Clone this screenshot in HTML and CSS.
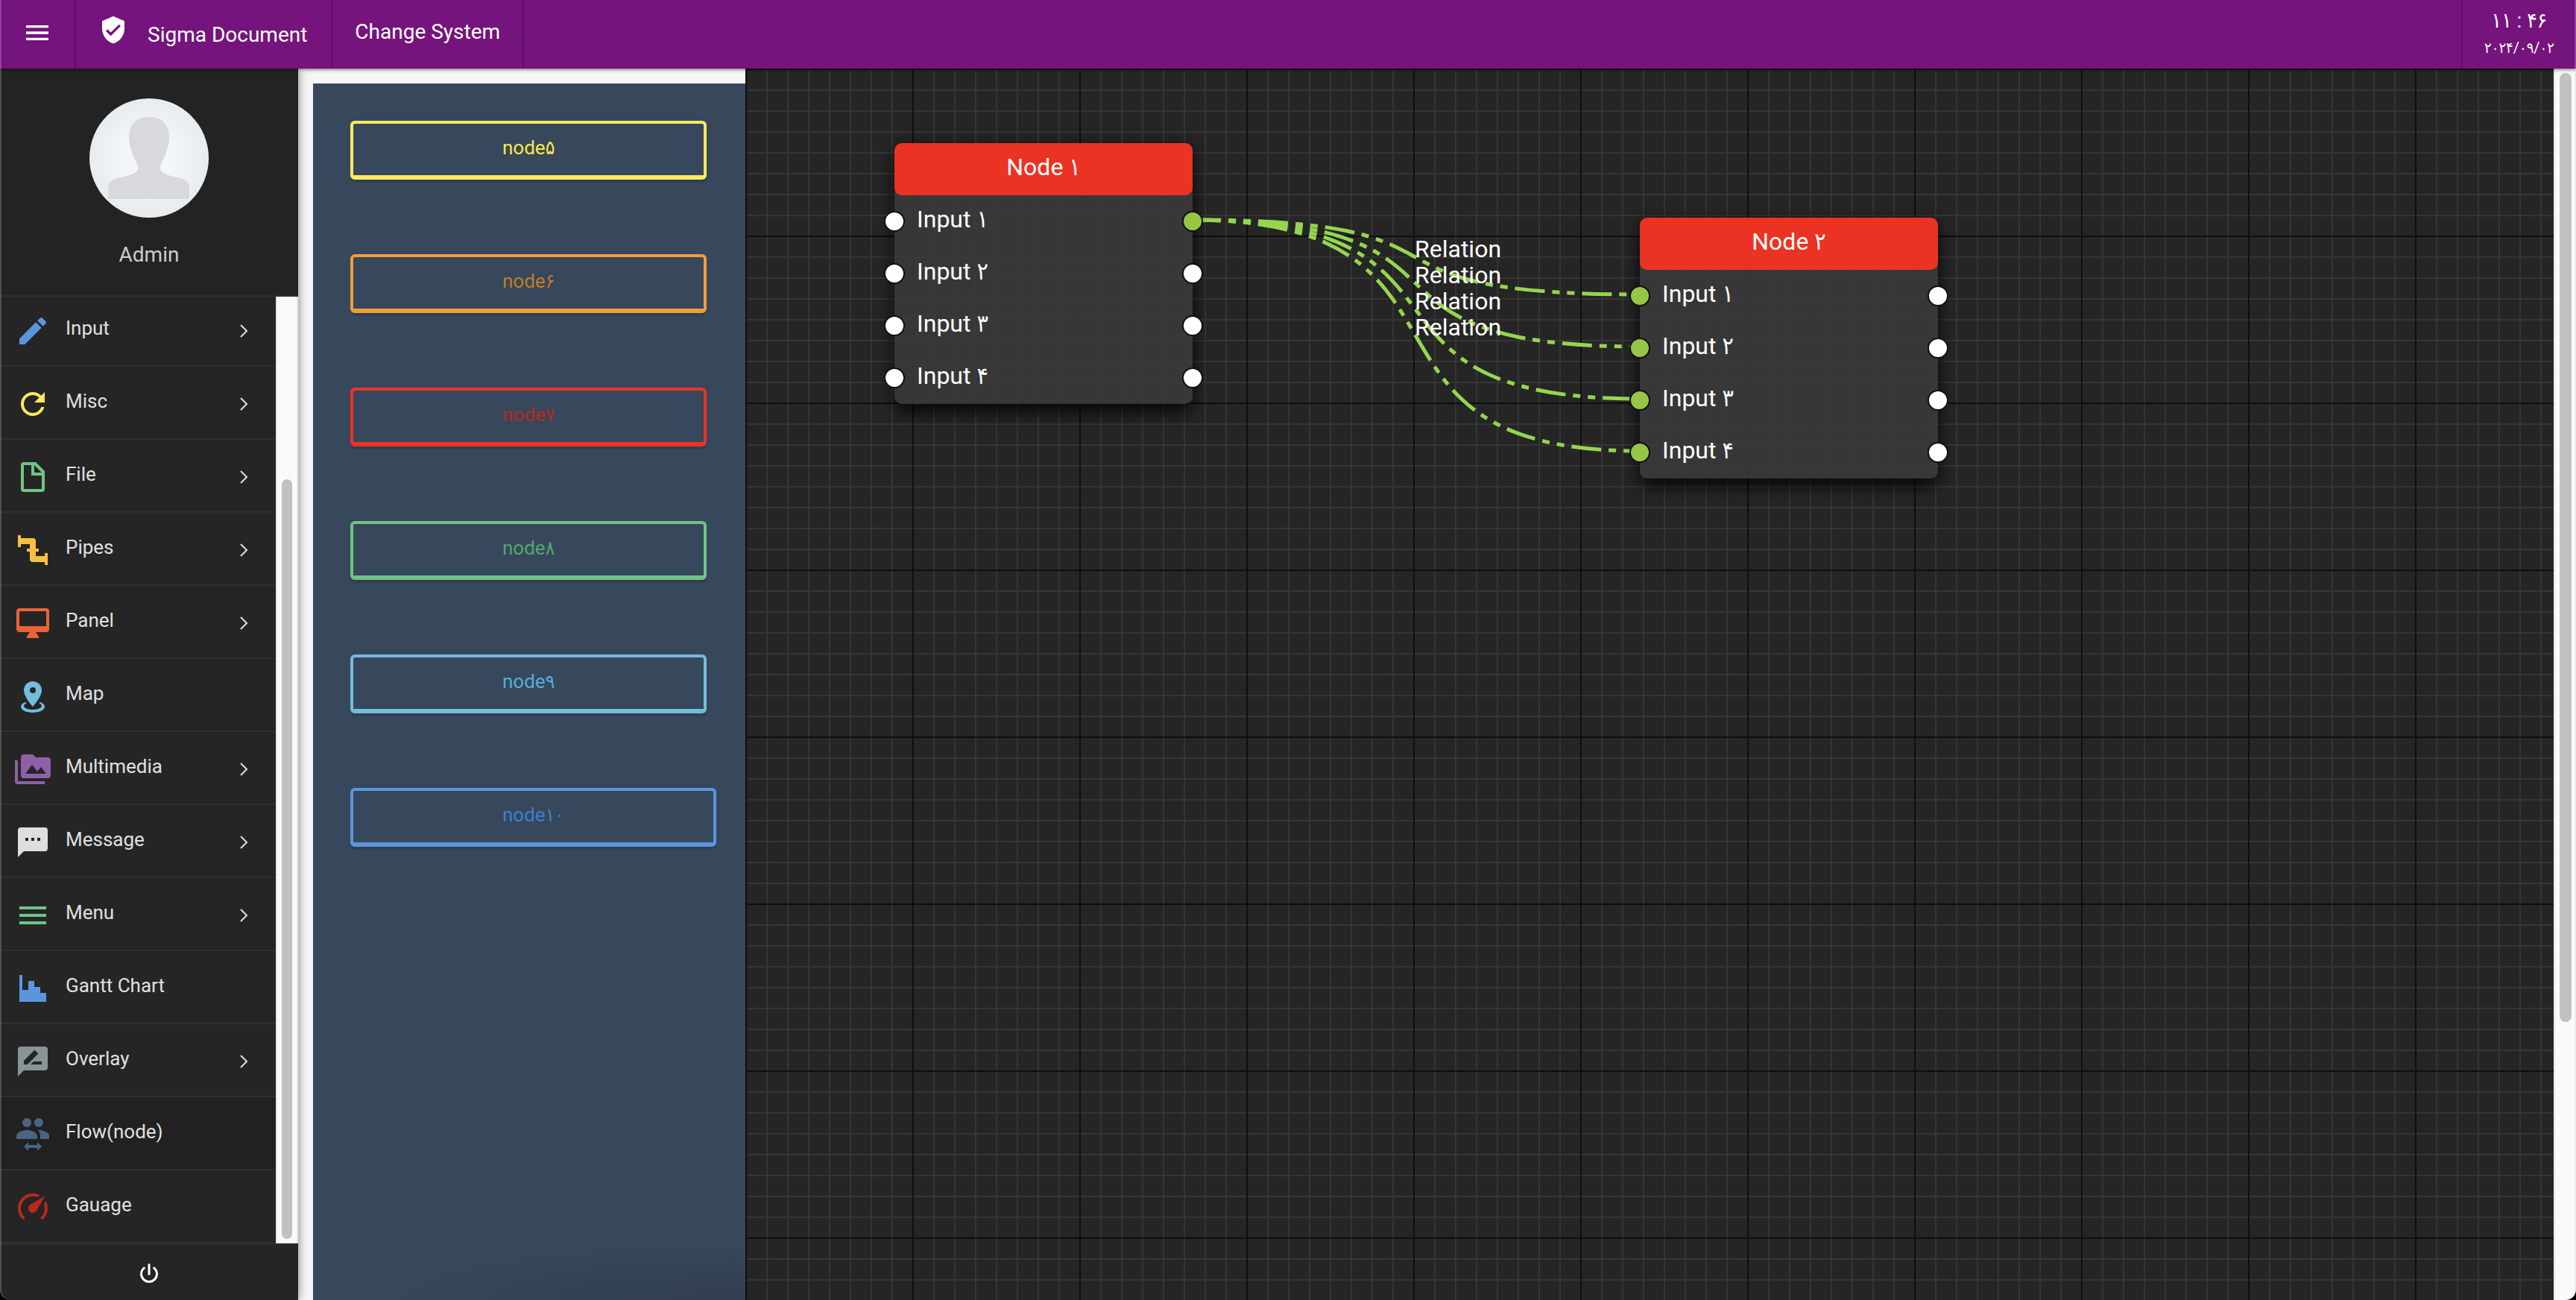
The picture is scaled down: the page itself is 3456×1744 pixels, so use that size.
FILE: index.html
```html
<!DOCTYPE html>
<html lang="en">
<head>
<meta charset="utf-8">
<title>Sigma Document</title>
<link rel="stylesheet" href="styles.css">
</head>
<body>
<div class="app">
  <header class="topbar">
    <button class="topbar-cell menu-toggle" type="button" aria-label="Toggle menu">
      <svg class="icon-md" viewBox="0 0 24 24"><path d="M3,6H21V8H3V6M3,11H21V13H3V11M3,16H21V18H3V16Z"/></svg>
    </button>
    <a class="topbar-cell brand" href="#">
      <svg class="icon-md brand-icon" viewBox="0 0 24 24"><path d="M10,17L6,13L7.41,11.59L10,14.17L16.59,7.58L18,9M12,1L3,5V11C3,16.55 6.84,21.74 12,23C17.16,21.74 21,16.55 21,11V5L12,1Z"/></svg>
      <span>Sigma Document</span>
    </a>
    <button class="topbar-cell change-system" type="button">Change System</button>
    <div class="clock">
      <time class="clock-time">۱۱ : ۴۶</time>
      <time class="clock-date">۲۰۲۴/۰۹/۰۲</time>
    </div>
  </header>

  <aside class="sidebar">
    <div class="profile">
      <svg class="avatar" viewBox="0 0 160 160" role="img" aria-label="Admin">
        <defs><radialGradient id="avatarFill"><stop offset="0.4" stop-color="#f3f6fa"/><stop offset="1" stop-color="#e9ecef"/></radialGradient>
        <clipPath id="avatarClip"><circle cx="80" cy="80" r="80"/></clipPath></defs>
        <circle cx="80" cy="80" r="80" fill="url(#avatarFill)"/>
        <path clip-path="url(#avatarClip)" fill="#d8d9de" d="M25 135V122C25 113 30 109 38 107C50 104 65 102 65 93C65 86 60 83 57 72C54 64 53 58 53 52C53 34 64 25 80 25C96 25 107 34 107 52C107 58 106 64 103 72C100 83 95 86 95 93C95 102 110 104 122 107C130 109 134 113 134 122V135Z"/>
      </svg>
      <span class="profile-name">Admin</span>
    </div>
    <div class="nav-wrap">
      <nav class="nav">
        <a class="nav-item" href="#"><svg class="nav-icon blue" viewBox="0 0 24 24"><path d="M20.71,7.04C21.1,6.65 21.1,6 20.71,5.63L18.37,3.29C18,2.9 17.35,2.9 16.96,3.29L15.12,5.12L18.87,8.87M3,17.25V21H6.75L17.81,9.93L14.06,6.18L3,17.25Z"/></svg><span class="nav-label">Input</span><svg class="chevron" viewBox="0 0 12 18"><path d="M2 1L10 9L2 17"/></svg></a>
        <a class="nav-item" href="#"><svg class="nav-icon yellow" viewBox="0 0 24 24"><path d="M17.65,6.35C16.2,4.9 14.21,4 12,4A8,8 0 0,0 4,12A8,8 0 0,0 12,20C15.73,20 18.84,17.45 19.73,14H17.65C16.83,16.33 14.61,18 12,18A6,6 0 0,1 6,12A6,6 0 0,1 12,6C13.66,6 15.14,6.69 16.22,7.78L13,11H20V4L17.65,6.35Z"/></svg><span class="nav-label">Misc</span><svg class="chevron" viewBox="0 0 12 18"><path d="M2 1L10 9L2 17"/></svg></a>
        <a class="nav-item" href="#"><svg class="nav-icon green" viewBox="0 0 24 24"><path fill-rule="evenodd" d="M6,2H14L20,8V20A2,2 0 0,1 18,22H6A2,2 0 0,1 4,20V4A2,2 0 0,1 6,2M6,4V20H18V11H11V4H6M13,4V9H18Z"/></svg><span class="nav-label">File</span><svg class="chevron" viewBox="0 0 12 18"><path d="M2 1L10 9L2 17"/></svg></a>
        <a class="nav-item" href="#"><svg class="nav-icon amber" viewBox="0 0 24 24"><path d="M22,14H20V16H14V13H16V11H14V6A2,2 0 0,0 12,4H4V2H2V10H4V8H10V11H8V13H10V18A2,2 0 0,0 12,20H20V22H22"/></svg><span class="nav-label">Pipes</span><svg class="chevron" viewBox="0 0 12 18"><path d="M2 1L10 9L2 17"/></svg></a>
        <a class="nav-item" href="#"><svg class="nav-icon coral" viewBox="0 0 24 24"><path fill-rule="evenodd" d="M3,2H21A2,2 0 0,1 23,4V16A2,2 0 0,1 21,18H14L16,21V22H8V21L10,18H3C1.89,18 1,17.1 1,16V4C1,2.89 1.89,2 3,2M3,4V14H21V4Z"/></svg><span class="nav-label">Panel</span><svg class="chevron" viewBox="0 0 12 18"><path d="M2 1L10 9L2 17"/></svg></a>
        <a class="nav-item" href="#"><svg class="nav-icon sky" viewBox="0 0 24 24"><path fill-rule="evenodd" d="M12,2A6,6 0 0,1 18,8C18,12.5 12,19 12,19C12,19 6,12.5 6,8A6,6 0 0,1 12,2M12,6A2,2 0 0,0 10,8A2,2 0 0,0 12,10A2,2 0 0,0 14,8A2,2 0 0,0 12,6Z"/><path d="M20,19C20,21.21 16.42,23 12,23C7.58,23 4,21.21 4,19C4,17.71 5.22,16.56 7.11,15.83L7.75,16.74C6.67,17.19 6,17.81 6,18.5C6,19.88 8.69,21 12,21C15.31,21 18,19.88 18,18.5C18,17.81 17.33,17.19 16.25,16.74L16.89,15.83C18.78,16.56 20,17.71 20,19Z"/></svg><span class="nav-label">Map</span></a>
        <a class="nav-item" href="#"><svg class="nav-icon purple" viewBox="0 0 24 24"><path fill-rule="evenodd" d="M22,4A2,2 0 0,1 24,6V16A2,2 0 0,1 22,18H6A2,2 0 0,1 4,16V4A2,2 0 0,1 6,2H12L14,4H22M2,6V20H20V22H2A2,2 0 0,1 0,20V6H2M7,15H21L17.5,10.5L15,13.5L11.5,9L7,15Z"/></svg><span class="nav-label">Multimedia</span><svg class="chevron" viewBox="0 0 12 18"><path d="M2 1L10 9L2 17"/></svg></a>
        <a class="nav-item" href="#"><svg class="nav-icon light" viewBox="0 0 24 24"><path fill-rule="evenodd" d="M20,2H4A2,2 0 0,0 2,4V22L6,18H20A2,2 0 0,0 22,16V4A2,2 0 0,0 20,2M7,9H9V11H7V9M11,9H13V11H11V9M15,9H17V11H15V9Z"/></svg><span class="nav-label">Message</span><svg class="chevron" viewBox="0 0 12 18"><path d="M2 1L10 9L2 17"/></svg></a>
        <a class="nav-item" href="#"><svg class="nav-icon green" viewBox="0 0 24 24"><path d="M3,6H21V8H3V6M3,11H21V13H3V11M3,16H21V18H3V16Z"/></svg><span class="nav-label">Menu</span><svg class="chevron" viewBox="0 0 12 18"><path d="M2 1L10 9L2 17"/></svg></a>
        <a class="nav-item" href="#"><svg class="nav-icon blue" viewBox="0 0 24 24"><path d="M3,3H5V13H9V7H13V11H17V15H21V21H3Z"/></svg><span class="nav-label">Gantt Chart</span></a>
        <a class="nav-item" href="#"><svg class="nav-icon gray" viewBox="0 0 24 24"><path fill-rule="evenodd" d="M20,2H4A2,2 0 0,0 2,4V22L6,18H20A2,2 0 0,0 22,16V4A2,2 0 0,0 20,2M6,14V11.5L12.88,4.64C13.07,4.45 13.39,4.45 13.59,4.64L15.35,6.41C15.55,6.61 15.55,6.92 15.35,7.12L8.47,14H6M18,14H10.5L12.5,12H18V14Z"/></svg><span class="nav-label">Overlay</span><svg class="chevron" viewBox="0 0 12 18"><path d="M2 1L10 9L2 17"/></svg></a>
        <a class="nav-item active" href="#"><svg class="nav-icon slate" viewBox="0 0 24 24"><circle cx="8" cy="4" r="3"/><circle cx="16" cy="4" r="3"/><path d="M8,9C5.33,9 1,10.34 1,13V15H15V13C15,10.34 10.67,9 8,9M16,9C15.71,9 15.38,9.02 15.03,9.05C16.19,9.89 17,11.02 17,12.5V15H23V13C23,10.34 18.67,9 16,9M9,17L6,20L9,23V21H15V23L18,20L15,17V19H9V17Z"/></svg><span class="nav-label">Flow(node)</span></a>
        <a class="nav-item" href="#"><svg class="nav-icon red" viewBox="0 0 24 24"><path d="M12,15.5A3,3 0 0,1 9,12.5C9,11.4 9.6,10.4 10.5,9.9L20.2,4.2L14.7,13.8C14.2,14.8 13.2,15.5 12,15.5M12,2.5C13.8,2.5 15.5,3 16.9,3.8L14.8,5C14,4.7 13,4.5 12,4.5A8,8 0 0,0 4,12.5C4,14.7 4.9,16.7 6.3,18.2C6.7,18.5 6.7,19.2 6.3,19.6C5.9,20 5.3,20 4.9,19.6C3.1,17.8 2,15.3 2,12.5A10,10 0 0,1 12,2.5M22,12.5C22,15.3 20.9,17.8 19.1,19.6C18.7,20 18.1,20 17.7,19.6C17.3,19.2 17.3,18.6 17.7,18.2C19.1,16.7 20,14.7 20,12.5C20,11.5 19.8,10.5 19.5,9.6L20.7,7.5C21.5,9 22,10.7 22,12.5Z"/></svg><span class="nav-label">Gauage</span></a>
      </nav>
      <div class="scrollbar nav-scrollbar"><div class="thumb"></div></div>
    </div>
    <button class="power" type="button" aria-label="Log out">
      <svg viewBox="0 0 24 24"><path d="M16.56,5.44L15.11,6.89C16.84,7.94 18,9.83 18,12A6,6 0 0,1 12,18A6,6 0 0,1 6,12C6,9.83 7.16,7.94 8.88,6.88L7.44,5.44C5.36,6.88 4,9.28 4,12A8,8 0 0,0 12,20A8,8 0 0,0 20,12C20,9.28 18.64,6.88 16.56,5.44M13,3H11V13H13"/></svg>
    </button>
  </aside>

  <main class="content">
    <section class="palette">
      <button type="button" class="chip chip-yellow">node۵</button>
      <button type="button" class="chip chip-orange">node۶</button>
      <button type="button" class="chip chip-red">node۷</button>
      <button type="button" class="chip chip-green">node۸</button>
      <button type="button" class="chip chip-sky">node۹</button>
      <button type="button" class="chip chip-blue">node۱۰</button>
    </section>
    <section class="canvas">
      <article class="node node-1">
        <h2 class="node-title">Node ۱</h2>
        <ul class="node-rows">
          <li><i class="port in"></i>Input ۱<i class="port out linked"></i></li>
          <li><i class="port in"></i>Input ۲<i class="port out"></i></li>
          <li><i class="port in"></i>Input ۳<i class="port out"></i></li>
          <li><i class="port in"></i>Input ۴<i class="port out"></i></li>
        </ul>
      </article>
      <article class="node node-2">
        <h2 class="node-title">Node ۲</h2>
        <ul class="node-rows">
          <li><i class="port in linked"></i>Input ۱<i class="port out"></i></li>
          <li><i class="port in linked"></i>Input ۲<i class="port out"></i></li>
          <li><i class="port in linked"></i>Input ۳<i class="port out"></i></li>
          <li><i class="port in linked"></i>Input ۴<i class="port out"></i></li>
        </ul>
      </article>
      <svg class="edges" width="1600" height="600" viewBox="0 0 1600 600">
        <g class="edge-lines">
          <path d="M598 203C1019 203 779 303 1200 303"/>
          <path d="M598 203C1019 203 779 373 1200 373"/>
          <path d="M598 203C1019 203 779 443 1200 443"/>
          <path d="M598 203C1019 203 779 513 1200 513"/>
        </g>
        <g class="edge-labels">
          <text x="898" y="253">Relation</text>
          <text x="898" y="288">Relation</text>
          <text x="898" y="323">Relation</text>
          <text x="898" y="358">Relation</text>
        </g>
      </svg>
    </section>
    <div class="scrollbar page-scrollbar"><div class="thumb"></div></div>
  </main>
</div>
</body>
</html>
```
FILE: styles.css
```css
* { box-sizing: border-box; }
html, body { height: 100%; }
body {
  margin: 0;
  background: #f6f6f6;
  font-family: Roboto, "DejaVu Sans Condensed", "DejaVu Sans", sans-serif;
  font-size: 26px;
  color: #fff;
}
button { font: inherit; color: inherit; background: none; border: 0; padding: 0; cursor: pointer; }
a { color: inherit; text-decoration: none; }
svg { display: block; fill: currentColor; flex: none; }

.app {
  height: 100vh;
  display: grid;
  grid-template: 92px minmax(0, 1fr) / 400px minmax(0, 1fr);
}
/* window frame with rounded bottom corners */
.app::before {
  content: "";
  position: fixed;
  inset: 0;
  border: solid rgba(255, 255, 255, .2);
  border-width: 0 2px;
  border-radius: 0 0 14px 14px;
  box-shadow: 0 0 0 14px #000;
  pointer-events: none;
  z-index: 5;
}

/* top bar */
.topbar {
  grid-column: 1 / -1;
  display: flex;
  background: #75147c;
  box-shadow: 0 1px 5px rgba(0, 0, 0, .6);
  font-size: 28px;
  z-index: 3;
}
.topbar-cell {
  display: flex;
  align-items: center;
  border-right: 2px solid #5f1067;
}
.icon-md { width: 40px; height: 40px; }
.menu-toggle { width: 102px; justify-content: center; padding-bottom: 4px; }
.brand { padding: 0 32px 0 30px; gap: 26px; }
.brand-icon { margin-bottom: 12px; }
.change-system { padding: 0 30px 8px; }
.clock {
  margin-left: auto;
  width: 154px;
  border-left: 2px solid #5f1067;
  display: flex;
  flex-direction: column;
  align-items: center;
  padding-top: 12px;
  gap: 4px;
}
.clock-time { font-size: 28px; line-height: 32px; }
.clock-date { font-size: 20px; line-height: 32px; }

/* sidebar */
.sidebar {
  background: #252525;
  display: flex;
  flex-direction: column;
  min-height: 0;
  box-shadow: 0 0 12px rgba(0, 0, 0, .5);
  z-index: 2;
}
.profile {
  height: 306px;
  flex: none;
  background: #232323;
  border-bottom: 2px solid #2f2f2f;
  display: flex;
  flex-direction: column;
  align-items: center;
  padding-top: 40px;
  gap: 32px;
}
.avatar { width: 160px; height: 160px; }
.profile-name { font-size: 28px; line-height: 36px; color: #ccc; }
.nav-wrap { flex: 1; min-height: 0; display: flex; }
.nav {
  flex: 1;
  display: flex;
  flex-direction: column;
  justify-content: flex-end;
  overflow: hidden;
}
.nav-item {
  flex: none;
  height: 98px;
  display: flex;
  align-items: center;
  padding: 4px 37px 0 20px;
  gap: 20px;
  border-bottom: 2px solid #2f2f2f;
}
.nav-item.active { background: #212121; }
.nav-icon { width: 48px; height: 48px; }
.nav-label { flex: 1; padding-bottom: 8px; color: #e0e0e0; }
.chevron { width: 12px; height: 18px; fill: none; stroke: #e0e0e0; stroke-width: 2; }
.blue { color: #5b96dd; }
.yellow { color: #fcea60; }
.green { color: #6fc486; }
.amber { color: #f6c142; }
.coral { color: #ec6337; }
.sky { color: #74bcdb; }
.purple { color: #8e60a8; }
.light { color: #dedede; }
.gray { color: #889495; }
.slate { color: #4c6482; }
.red { color: #bd271b; }

.scrollbar {
  width: 30px;
  flex: none;
  background: #fafafa;
  border: solid #e8e8e8;
  border-width: 0 2px;
  padding: 6px;
}
.thumb { width: 16px; border-radius: 8px; background: #c1c1c1; }
.nav-scrollbar { display: flex; align-items: flex-end; }
.nav-scrollbar .thumb { height: 81%; }
.page-scrollbar .thumb { height: 77.6%; }
.power {
  height: 76px;
  flex: none;
  border-top: 2px solid #2f2f2f;
  display: flex;
  align-items: center;
  justify-content: center;
  padding-top: 4px;
}
.power svg { width: 36px; height: 36px; }

/* content */
.content { display: flex; min-height: 0; min-width: 0; }
.palette {
  width: 580px;
  flex: none;
  margin: 20px 0 0 20px;
  padding: 50px;
  background: #37475c radial-gradient(ellipse 480px 76px at 100% 100%, rgba(35, 40, 50, .3), transparent) no-repeat;
  display: flex;
  flex-direction: column;
  align-items: flex-start;
  gap: 100px;
}
.chip {
  padding: 12px 200px 17px;
  line-height: 40px;
  border: solid;
  border-width: 4px 4px 6px;
  border-radius: 6px;
  box-shadow: 0 4px 1px rgba(0, 0, 0, .12);
}
.chip-yellow { border-color: #fcea60; color: #fbe74b; }
.chip-orange { border-color: #f19d38; color: #c07d24; }
.chip-red { border-color: #eb3324; color: #b8271d; }
.chip-green { border-color: #6fc486; color: #54a76a; }
.chip-sky { border-color: #74bcdb; color: #57aed4; }
.chip-blue { border-color: #5b96dd; color: #3f7dcf; }

.canvas {
  flex: 1;
  min-width: 0;
  position: relative;
  overflow: hidden;
  background-color: #252525;
  background-image:
    linear-gradient(#0e0e0e 2px, transparent 2px),
    linear-gradient(90deg, #0e0e0e 2px, transparent 2px),
    linear-gradient(#353535 2px, transparent 2px),
    linear-gradient(90deg, #353535 2px, transparent 2px);
  background-size: 224px 224px, 224px 224px, 28px 28px, 28px 28px;
}

.node {
  position: absolute;
  width: 400px;
  border-radius: 10px;
  background: rgba(58, 58, 58, .9);
  box-shadow: 0 14px 24px -4px rgba(0, 0, 0, .8), 0 0 16px rgba(0, 0, 0, .4);
  font-size: 32px;
  line-height: 64px;
  z-index: 1;
}
.node-1 { left: 200px; top: 100px; }
.node-2 { left: 1200px; top: 200px; }
.node-title {
  margin: 0;
  padding-bottom: 6px;
  border-radius: 10px;
  background: #eb3324;
  font: inherit;
  text-align: center;
}
.node-rows { list-style: none; margin: 0; padding: 0; }
.node-rows li { position: relative; padding: 0 30px 6px; }
.port {
  position: absolute;
  top: 21px;
  width: 28px;
  height: 28px;
  border: 2px solid #111;
  border-radius: 50%;
  background: #fff;
}
.port.in { left: -14px; }
.port.out { right: -14px; }
.port.linked { background: #97c647; }
.edges { position: absolute; left: 0; top: 0; }
.edge-lines { fill: none; stroke: #96d54f; stroke-width: 5; stroke-dasharray: 40 10 10 10 10 10; }
.edge-labels { font-size: 32px; fill: #fff; }
```
